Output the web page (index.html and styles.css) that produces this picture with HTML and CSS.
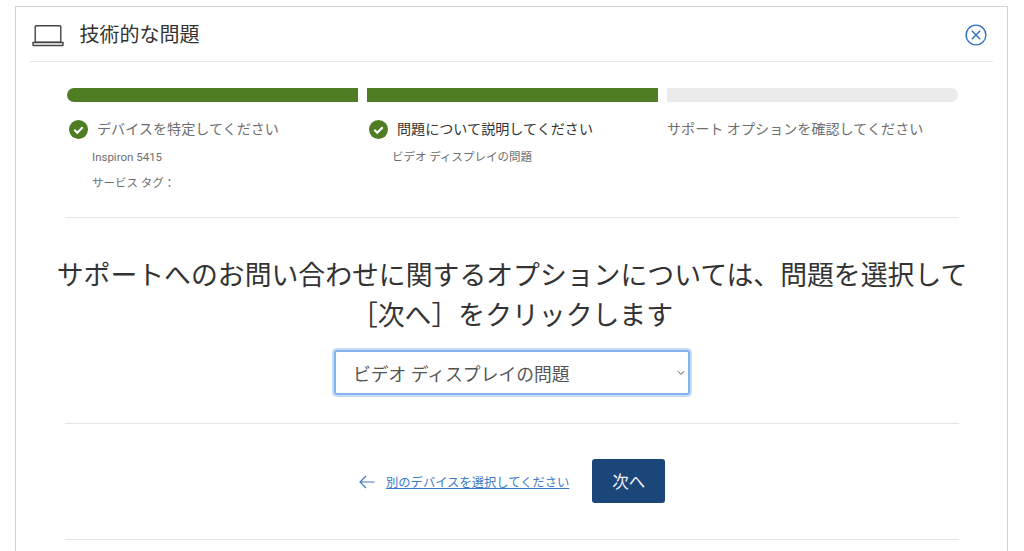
FILE: index.html
```html
<!DOCTYPE html>
<html lang="ja">
<head>
<meta charset="utf-8">
<title>技術的な問題</title>
<link rel="stylesheet" href="styles.css">
</head>
<body>
<main class="card">
  <header class="card-head">
    <svg class="laptop" width="32" height="24" viewBox="0 0 32 24" fill="none" stroke="#444" stroke-width="1.4">
      <rect x="3.2" y="2.7" width="25.6" height="16.6" rx="0.8"/>
      <path d="M1 19.5h30v2.2a0.8 0.8 0 0 1-.8.8H1.8a0.8 0.8 0 0 1-.8-.8z"/>
    </svg>
    <h1 class="card-title">技術的な問題</h1>
    <svg class="close" width="22" height="22" viewBox="0 0 22 22" fill="none" stroke="#2f72c4" stroke-width="1.4">
      <circle cx="11" cy="11" r="9.9"/>
      <path d="M6.8 6.8l8.4 8.4M15.2 6.8l-8.4 8.4"/>
    </svg>
  </header>
  <div class="content">
    <div class="bars">
      <span class="bar bar-first done"></span>
      <span class="bar done"></span>
      <span class="bar bar-last"></span>
    </div>
    <div class="steps">
      <section class="step">
        <div class="step-head">
          <svg class="check" width="19" height="19" viewBox="0 0 18 18"><circle cx="9" cy="9" r="9" fill="#4f7d23"/><path d="M5 9.3l2.8 2.7L13 6.8" fill="none" stroke="#fff" stroke-width="2"/></svg>
          <span class="step-title">デバイスを特定してください</span>
        </div>
        <p class="step-sub">Inspiron 5415</p>
        <p class="step-sub">サービス タグ：</p>
      </section>
      <section class="step">
        <div class="step-head">
          <svg class="check" width="19" height="19" viewBox="0 0 18 18"><circle cx="9" cy="9" r="9" fill="#4f7d23"/><path d="M5 9.3l2.8 2.7L13 6.8" fill="none" stroke="#fff" stroke-width="2"/></svg>
          <span class="step-title current">問題について説明してください</span>
        </div>
        <p class="step-sub">ビデオ ディスプレイの問題</p>
      </section>
      <section class="step">
        <div class="step-head plain">
          <span class="step-title">サポート オプションを確認してください</span>
        </div>
      </section>
    </div>
    <hr class="rule rule-a">
    <h2 class="prompt">サポートへのお問い合わせに関するオプションについては、問題を選択して<br>［次へ］をクリックします</h2>
    <div class="select-row">
      <div class="select-box">
        <span class="select-value">ビデオ ディスプレイの問題</span>
        <svg class="chevron" width="8" height="6" viewBox="0 0 8 6" fill="none" stroke="#555" stroke-width="1"><path d="M0.8 1.2L4 4.4l3.2-3.2"/></svg>
      </div>
    </div>
    <hr class="rule rule-b">
    <div class="actions">
      <svg class="back-arrow" width="16" height="14" viewBox="0 0 16 14" fill="none" stroke="#3a7bc8" stroke-width="1.2"><path d="M15.5 7H1M7 1L1 7l6 6"/></svg>
      <a class="back-link" href="#">別のデバイスを選択してください</a>
      <button class="next" type="button">次へ</button>
    </div>
    <hr class="rule rule-c">
  </div>
</main>
</body>
</html>
```
FILE: styles.css
```css
* { box-sizing: border-box; }
html, body { margin: 0; height: 551px; overflow: hidden; background: #fff; }
body {
  padding: 6px 16px 0 15px;
  font-family: Roboto, "Noto Sans CJK JP", sans-serif;
  color: #444;
}
.card {
  border: 1px solid #d4d4d4;
  border-bottom: 0;
  height: 545px;
  padding: 0 14px;
  overflow: hidden;
}
.card-head {
  height: 55px;
  display: flex;
  align-items: center;
  border-bottom: 1px solid #e6e6e6;
  padding: 0 2px 0 2px;
}
.laptop { flex: none; margin-top: 1px; }
.card-title {
  margin: 0 0 2px 15.5px;
  font-size: 20px;
  font-weight: 400;
  color: #333;
  flex: 1;
}
.close { flex: none; margin: 2px 4px 0 0; }
.content { padding: 0 34px 0 35px; }
.bars {
  display: grid;
  grid-template-columns: repeat(3, 291px);
  gap: 9px;
  margin: 26px 0 0 2px;
}
.bar { height: 14px; background: #ebebeb; display: block; }
.bar.done { background: #4f7d23; }
.bar-first { border-radius: 7px 0 0 7px; }
.bar-last { border-radius: 0 7px 7px 0; }
.steps {
  display: grid;
  grid-template-columns: repeat(3, 291px);
  gap: 9px;
  margin: 18px 0 0 2px;
  height: 97px;
}
.step-head { display: flex; align-items: center; height: 18px; padding-left: 2px; }
.step-head.plain { padding-left: 0; }
.check { flex: none; margin-right: 9px; }
.step-title { font-size: 14.1px; color: #6e6e6e; white-space: nowrap; margin-bottom: 2px; }
.step-title.current { color: #333; }
.step-sub {
  margin: 0 0 0 25px;
  font-size: 11.5px;
  line-height: 26px;
  color: #6e6e6e;
  white-space: nowrap;
}
.step-head + .step-sub { margin-top: 6px; }
.rule { border: 0; border-top: 1px solid #e6e6e6; margin: 0; }
.prompt {
  margin: 38px -30px 0;
  font-size: 26.85px;
  line-height: 40px;
  font-weight: 400;
  color: #333;
  text-align: center;
  white-space: nowrap;
}
.select-row { display: flex; justify-content: center; margin-top: 14px; }
.select-box {
  position: relative;
  width: 356px;
  height: 45px;
  display: flex;
  align-items: center;
  padding-left: 17px;
  border: 2px solid #84b4ec;
  border-radius: 3px;
  box-shadow: 0 0 0 2px #c6dbf5;
}
.select-value { font-size: 17.8px; color: #555; }
.chevron { position: absolute; right: 3px; top: 18px; }
.rule-b { margin-top: 28px; }
.actions {
  display: flex;
  align-items: center;
  height: 115px;
  padding-left: 294px;
}
.back-arrow { flex: none; margin-right: 11px; }
.back-link { font-size: 12.3px; color: #3a7bc8; white-space: nowrap; }
.next {
  margin: 0 0 2px 23px;
  width: 73px;
  height: 44px;
  border: 0;
  border-radius: 3px;
  background: #1a4679;
  color: #f2f2f2;
  font: inherit;
  font-size: 16.5px;
}
```
